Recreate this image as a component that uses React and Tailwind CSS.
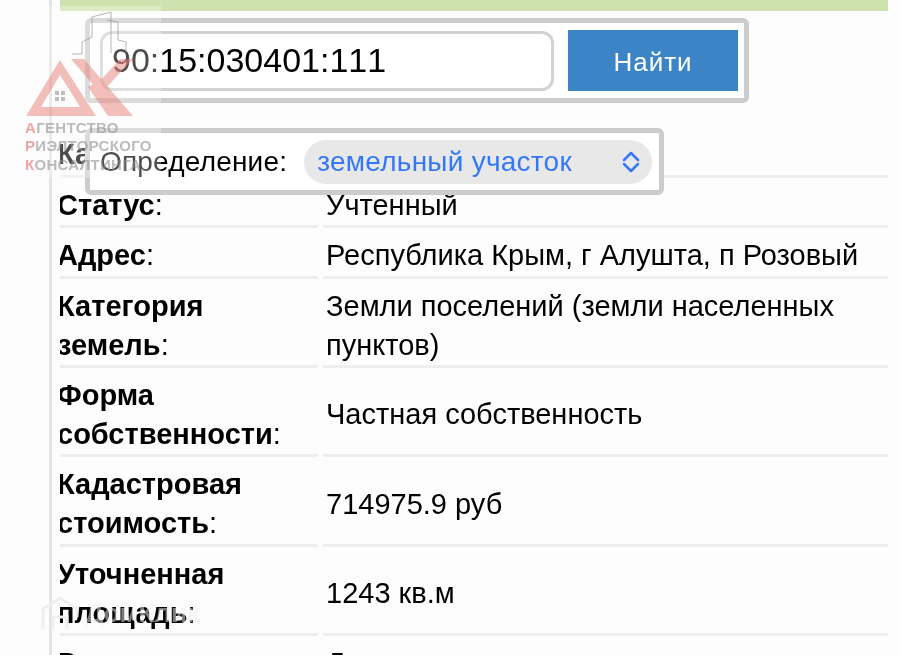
const rows = [
  { label: 'Ка', value: '', h: 'h-[167px]', end: true },
  { label: 'Статус', value: 'Учтенный', h: 'h-[50px]' },
  { label: 'Адрес', value: 'Республика Крым, г Алушта, п Розовый', h: 'h-[51px]' },
  { label: 'Категория земель', value: 'Земли поселений (земли населенных пунктов)', h: 'h-[89px]' },
  { label: 'Форма собственности', value: 'Частная собственность', h: 'h-[89px]' },
  { label: 'Кадастровая стоимость', value: '714975.9 руб', h: 'h-[90px]' },
  { label: 'Уточненная площадь', value: '1243 кв.м', h: 'h-[89px]' },
  { label: 'Разрешенное использование', value: 'Для индивидуального жилищного строительства', h: 'h-[89px]' },
];

function Row({ label, value, h, end }) {
  return (
    <div className={`flex gap-[5px] ${h}`}>
      <div className={`w-[258px] flex overflow-hidden border-b-[3px] border-[#eeeeee] ${end ? 'items-end pb-[1px]' : 'items-center pt-[7px]'}`}>
        <p className="-ml-[3px] w-[261px] font-bold">
          {end ? label : <>{label}<span className="font-normal">:</span></>}
        </p>
      </div>
      <div className="w-[565px] flex items-center pt-[7px] pl-[3px] pr-[20px] border-b-[3px] border-[#eeeeee]">
        <p>{value}</p>
      </div>
    </div>
  );
}

function Logo() {
  return (
    <svg className="absolute left-0 top-0" width="170" height="125" viewBox="0 0 170 125">
      <path d="M72 54H82V42L92 37V17L111 12V53M107 20L118 22V40L126 42V53" fill="none" stroke="#999999" strokeWidth="1" opacity="0.7" />
      <g fill="#e8807a" opacity="0.5">
        <path fillRule="evenodd" d="M60 60L96 116H26ZM60 75L41 107H80Z" />
        <path d="M71 59H84L133 116H120Z" />
        <path d="M133 59H120L98 83L104 90Z" />
        <path d="M88 87L95 83L120 116H108Z" />
      </g>
      <path d="M55 91H59V95H55ZM61 91H65V95H61ZM55 97H59V101H55ZM61 97H65V101H61Z" fill="#bdbdbd" />
    </svg>
  );
}

function LogoText() {
  const lines = [
    ['А', 'ГЕНТСТВО', 'top-[119px]'],
    ['Р', 'ИЭЛТОРСКОГО', 'top-[137px]'],
    ['К', 'ОНСАЛТИНГА', 'top-[156px]'],
  ];
  return lines.map(([first, rest, top]) => (
    <p key={first} className={`absolute left-[25px] ${top} text-[15px] leading-[18px] font-bold tracking-[0.3px] text-[#8f8f8f]/60 whitespace-nowrap`}>
      <span className="text-[#e8807a]/70">{first}</span>{rest}
    </p>
  ));
}

export default function App() {
  return (
    <div className="relative w-[900px] h-[655px] overflow-hidden bg-[#fdfdfd] text-[29px] leading-[39px] text-black font-['Liberation_Sans',sans-serif] blur-[0.4px]">
      {/* таблица */}
      <div className="ml-[49px] w-[851px] h-full border-l-[3px] border-[#e3e3e3] pl-[8px]">
        <div className="w-[828px] h-[11px] bg-[#cde2ae]" />
        {rows.map((row) => <Row key={row.label} {...row} />)}
      </div>

      {/* поиск */}
      <div className="absolute left-[85px] top-[18px] w-[664px] h-[85px] flex items-center gap-[14px] pl-[10px] pr-[6px] bg-white border-[5px] border-[#cccccc] rounded-[6px]">
        <div className="w-[454px] h-[60px] flex items-center pl-[9px] bg-white border-[3px] border-[#d2d2d2] rounded-[12px] text-[34px] [font-kerning:none] text-black">
          90:15:030401:111
        </div>
        <button className="w-[170px] h-[61px] pt-[4px] bg-[#3b85c6] text-white text-[26px] tracking-[1px]">Найти</button>
      </div>

      {/* определение */}
      <div className="absolute left-[85px] top-[128px] w-[579px] h-[67px] flex items-center gap-[17px] pl-[10px] bg-white border-[5px] border-[#cccccc] rounded-[6px]">
        <span className="text-[28px] tracking-[0.2px]">Определение:</span>
        <div className="w-[348px] h-[44px] flex items-center justify-between pl-[13px] pr-[12px] rounded-full bg-[#e8e8e8] text-[28px] text-[#3478f6] tracking-[0.25px]">
          <span>земельный участок</span>
          <svg width="18" height="22" viewBox="0 0 18 22" fill="none" stroke="#3478f6" strokeWidth="2.5" strokeLinecap="round" strokeLinejoin="round">
            <path d="M2 9L9 2L16 9M2 13L9 20L16 13" />
          </svg>
        </div>
      </div>

      {/* водяной знак */}
      <div className="absolute left-0 top-[6px] w-[161px] h-[172px] bg-white/30" />
      <Logo />
      <LogoText />

      {/* Домклик */}
      <svg className="absolute left-[40px] top-[595px]" width="40" height="36" viewBox="0 0 40 36" fill="none" stroke="#efefef" strokeWidth="3">
        <path d="M3 34V14L20 3L37 14V22M13 34V22H27V34" />
      </svg>
      <p className="absolute left-[85px] top-[594px] text-[26px] font-bold text-[#f0f0f0]/50">ДомКлик</p>
    </div>
  );
}
